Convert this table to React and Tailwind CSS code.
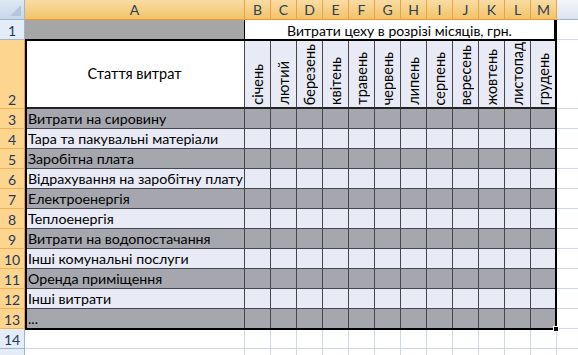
import React from "react";

const months = [
  "січень",
  "лютий",
  "березень",
  "квітень",
  "травень",
  "червень",
  "липень",
  "серпень",
  "вересень",
  "жовтень",
  "листопад",
  "грудень",
];

const items = [
  "Витрати на сировину",
  "Тара та пакувальні матеріали",
  "Заробітна плата",
  "Відрахування на заробітну плату",
  "Електроенергія",
  "Теплоенергія",
  "Витрати на водопостачання",
  "Інші комунальні послуги",
  "Оренда приміщення",
  "Інші витрати",
  "...",
];

const letters = ["B", "C", "D", "E", "F", "G", "H", "I", "J", "K", "L", "M"];

// row number on the left; selected rows are orange
const RowHead = ({ n, selected, h = "h-5" }) => (
  <div
    className={`${h} w-[25px] shrink-0 flex items-end justify-center border-r border-b pb-px text-[14px] leading-none ${
      selected
        ? "bg-[#fdd58e] border-r-[#f29536] border-b-[#f1b35a] text-[#25395a]"
        : "bg-[#e4ecf7] border-r-[#9eb6ce] border-b-[#9eb6ce] text-[#25395a]"
    }`}
  >
    {n}
  </div>
);

const App = () => {
  return (
    <div className="relative w-[578px] h-[355px] overflow-hidden bg-white text-black [font-family:Lato,sans-serif]">
      {/* column headers */}
      <div className="flex h-5">
        <div className="relative w-[25px] shrink-0 border-r border-b border-[#9eb6ce] bg-gradient-to-b from-[#dfe8f4] to-[#c9d7ea]">
          <div className="absolute right-[3px] bottom-[3px] w-0 h-0 border-l-[11px] border-l-transparent border-b-[11px] border-b-[#b4c6de]" />
        </div>
        <div className="w-[220px] shrink-0 flex items-center justify-center border-r border-b border-r-[#eaa24c] border-b-[#f29536] bg-gradient-to-b from-[#f9dca3] to-[#f2c366] text-[14px] text-[#2d3f57]">
          A
        </div>
        {letters.map((l) => (
          <div
            key={l}
            className="w-[26px] shrink-0 flex items-center justify-center border-r border-b border-r-[#eaa24c] border-b-[#f29536] bg-gradient-to-b from-[#f9dca3] to-[#f2c366] text-[14px] text-[#2d3f57]"
          >
            {l}
          </div>
        ))}
        <div className="flex-1 border-b border-[#9eb6ce] bg-gradient-to-b from-[#f3f6fb] to-[#dce4ef]" />
      </div>

      {/* row 1 */}
      <div className="flex h-5">
        <RowHead n="1" />
        <div className="w-[220px] shrink-0 bg-[#a6a6a6] border-r border-black" />
        <div className="w-[312px] shrink-0 flex items-end justify-center border-r-[3px] border-black text-[14px] leading-[18px]">
          Витрати цеху в розрізі місяців, грн.
        </div>
        <div className="flex-1 border-b border-[#d0d7e5]" />
      </div>

      {/* row 2 */}
      <div className="flex h-[69px]">
        <RowHead n="2" selected h="h-[69px]" />
        <div className="w-[220px] shrink-0 flex items-center justify-center bg-white border-r border-b-2 border-r-[#45474d] border-b-[#222] text-[14.5px]">
          Стаття витрат
        </div>
        {months.map((m) => (
          <div
            key={m}
            className="w-[26px] shrink-0 flex items-end justify-center pb-[2px] bg-[#e8ebf5] border-r border-b-2 border-r-[#45474d] border-b-[#222]"
          >
            <span className="[writing-mode:vertical-rl] rotate-180 text-[14.5px] leading-[18px] whitespace-nowrap">
              {m}
            </span>
          </div>
        ))}
        <div className="flex-1 border-b border-[#d0d7e5]" />
      </div>

      {/* rows 3..13 */}
      {items.map((it, i) => {
        const dark = i % 2 === 0;
        const bg = dark ? "bg-[#a6a7ae]" : "bg-[#e8ebf5]";
        return (
          <div key={i} className="flex h-5">
            <RowHead n={i + 3} selected />
            <div
              className={`w-[220px] shrink-0 flex items-end pl-[3px] border-r border-b border-[#45474d] text-[14.2px] leading-[18px] whitespace-nowrap ${bg}`}
            >
              {it}
            </div>
            {months.map((m) => (
              <div
                key={m}
                className={`w-[26px] shrink-0 border-r border-b border-[#45474d] ${bg}`}
              />
            ))}
            <div className="flex-1 border-b border-[#d0d7e5]" />
          </div>
        );
      })}

      {/* rows 14, 15 */}
      {["14", ""].map((n, k) => (
        <div key={k} className="flex h-5">
          <RowHead n={n} />
          <div className="w-[220px] shrink-0 border-r border-b border-[#d0d7e5]" />
          {months.map((m) => (
            <div
              key={m}
              className="w-[26px] shrink-0 border-r border-b border-[#d0d7e5]"
            />
          ))}
          <div className="flex-1 border-b border-[#d0d7e5]" />
        </div>
      ))}

      {/* selection outline A2:M13 */}
      <div className="pointer-events-none absolute left-[25px] top-[39px] w-[532px] h-[291px] border-2 border-black" />
      <div className="pointer-events-none absolute left-[553px] top-[326px] w-[6px] h-[6px] bg-black border border-white" />
    </div>
  );
};

export default App;
